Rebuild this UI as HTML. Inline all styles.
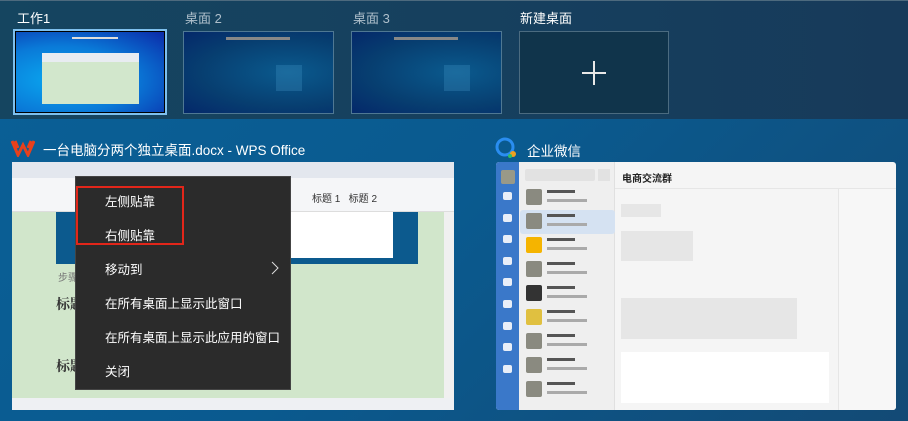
<!DOCTYPE html>
<html><head><meta charset="utf-8"><style>
*{margin:0;padding:0;box-sizing:border-box}
body{width:908px;height:421px;overflow:hidden;font-family:"Liberation Sans","Noto Sans CJK SC",sans-serif;background:linear-gradient(135deg,#0a6097 0%,#0a5a8f 50%,#134a75 100%);position:relative}
.top{position:absolute;left:0;top:0;width:908px;height:119px;background:linear-gradient(90deg,#154560,#163f5e 60%,#173a5a);border-top:1px solid #4d6a7e}
.lab{position:absolute;top:7px;font-size:13px;color:#aebfcb}
.th{position:absolute;top:30px;height:83px;border:1px solid #4f7893;background:radial-gradient(ellipse at 70% 50%,#0a5a8e,#073e70 60%,#04286a);}
.a{position:absolute}
.t{position:absolute;color:#fff;font-size:13.5px}
.mi{position:absolute;left:105px;color:#fff;font-size:12.5px}
.li{position:absolute;left:24px;width:95px;height:24px}
.li .av{position:absolute;left:6px;top:3px;width:16px;height:16px;background:#8a8a80;border-radius:2px}
.li .n{position:absolute;left:27px;top:4px;width:28px;height:3px;background:#555}
.li .m{position:absolute;left:27px;top:13px;width:40px;height:3px;background:#aaa}
.si{position:absolute;left:7px;width:9px;height:8px;background:#e8eef8;border-radius:2px}
</style></head><body>
<div class="top">
<div class="lab" style="left:17px;color:#fff">工作1</div>
<div class="lab" style="left:185px">桌面 2</div>
<div class="lab" style="left:353px">桌面 3</div>
<div class="lab" style="left:520px;color:#fff">新建桌面</div>
<div class="th" style="left:13px;top:28px;width:154px;height:86px;border:2px solid #7ec0ee;background:#000;padding:1px">
 <div style="width:100%;height:100%;background:radial-gradient(ellipse at 30% 60%,#0aa8f0,#0a7ad8 50%,#0b2aa8)"></div>
 <div class="a" style="left:27px;top:22px;width:97px;height:51px;background:#d2e7cc;border-top:9px solid #e8ecf1"></div>
 <div class="a" style="left:57px;top:6px;width:46px;height:2px;background:#ddd"></div>
</div>
<div class="th" style="left:183px;width:151px"><div class="a" style="left:42px;top:5px;width:64px;height:3px;background:#888"></div><div class="a" style="left:92px;top:33px;width:26px;height:26px;background:rgba(60,140,190,.35)"></div></div>
<div class="th" style="left:351px;width:151px"><div class="a" style="left:42px;top:5px;width:64px;height:3px;background:#888"></div><div class="a" style="left:92px;top:33px;width:26px;height:26px;background:rgba(60,140,190,.35)"></div></div>
<div class="th" style="left:519px;width:150px;background:#10344b;border-color:#4b6b80">
 <div class="a" style="left:62px;top:40px;width:24px;height:2px;background:#e8e8e8"></div>
 <div class="a" style="left:73px;top:29px;width:2px;height:24px;background:#e8e8e8"></div>
</div>
</div>

<!-- WPS -->
<svg class="a" style="left:11px;top:139px" width="24" height="18" viewBox="0 0 24 18"><path d="M1 2 L7 16 L12 6 L17 16 L23 2 M4 2 L7 9 M20 2 L17 9" stroke="#e8401c" stroke-width="3" fill="none"/></svg>
<div class="t" style="left:43px;top:139px">一台电脑分两个独立桌面.docx - WPS Office</div>
<div class="a" style="left:12px;top:162px;width:442px;height:248px;background:#d1e6cb">
 <div class="a" style="left:0;top:0;width:442px;height:16px;background:#e3e7ee"></div>
 <div class="a" style="left:0;top:16px;width:442px;height:34px;background:#f5f6f8;border-bottom:1px solid #ddd"></div>
 <div class="a" style="left:44px;top:50px;width:362px;height:52px;background:#0c5a8e"></div>
 <div class="a" style="left:66px;top:50px;width:315px;height:46px;background:#fff"></div>
 <div class="a" style="left:0;top:236px;width:442px;height:12px;background:#eef0f3"></div>
 <div class="a" style="left:46px;top:107px;font-size:10px;color:#777">步骤</div>
 <div class="a" style="left:44px;top:132px;font-size:14px;color:#333;font-weight:bold;font-family:'Noto Serif CJK SC',serif">标题</div>
 <div class="a" style="left:44px;top:194px;font-size:14px;color:#333;font-weight:bold;font-family:'Noto Serif CJK SC',serif">标题</div>
 <div class="a" style="left:300px;top:28px;font-size:10px;color:#333">标题 1 &nbsp; 标题 2</div>
 <div class="a" style="left:432px;top:50px;width:10px;height:186px;background:#f0f0f0"></div>
</div>
<div class="a" style="left:75px;top:176px;width:216px;height:214px;background:#2b2b2b;border:1px solid #444"></div>
<div class="a" style="left:76px;top:186px;width:108px;height:59px;border:2px solid #e2261a"></div>
<div class="mi" style="top:191px">左侧贴靠</div>
<div class="mi" style="top:225px">右侧贴靠</div>
<div class="mi" style="top:259px">移动到</div>
<svg class="a" style="left:271px;top:261px" width="8" height="14"><path d="M1 1 L7 7 L1 13" stroke="#ddd" fill="none"/></svg>
<div class="mi" style="top:293px">在所有桌面上显示此窗口</div>
<div class="mi" style="top:327px">在所有桌面上显示此应用的窗口</div>
<div class="mi" style="top:361px">关闭</div>

<!-- WeChat -->
<svg class="a" style="left:495px;top:136px" width="24" height="24" viewBox="0 0 24 24"><circle cx="10" cy="11" r="8" stroke="#2a8df0" stroke-width="3" fill="none"/><circle cx="18" cy="18" r="3" fill="#f0a020"/><circle cx="15" cy="20" r="2" fill="#30c060"/></svg>
<div class="t" style="left:527px;top:140px">企业微信</div>
<div class="a" style="left:496px;top:162px;width:400px;height:248px;background:#f5f5f5;border-radius:3px;overflow:hidden">
 <div class="a" style="left:0;top:0;width:23px;height:248px;background:#3a78c9"></div>
 <div class="a" style="left:5px;top:8px;width:14px;height:14px;background:#998;border-radius:2px"></div>
 <div class="si" style="top:30px"></div><div class="si" style="top:52px"></div><div class="si" style="top:73px"></div><div class="si" style="top:95px"></div><div class="si" style="top:116px"></div><div class="si" style="top:138px"></div><div class="si" style="top:160px"></div><div class="si" style="top:181px"></div><div class="si" style="top:203px"></div>
 <div class="a" style="left:23px;top:0;width:96px;height:248px;background:#efefef;border-right:1px solid #e0e0e0"></div>
 <div class="a" style="left:29px;top:7px;width:70px;height:12px;background:#e2e2e2;border-radius:2px"></div>
 <div class="a" style="left:102px;top:7px;width:12px;height:12px;background:#e2e2e2"></div>
 <div class="a" style="left:24px;top:48px;width:95px;height:24px;background:#d5e2f2;border-radius:3px"></div>
 <div class="li" style="top:24px"><div class="av"></div><div class="n"></div><div class="m"></div></div>
 <div class="li" style="top:48px"><div class="av"></div><div class="n"></div><div class="m"></div></div>
 <div class="li" style="top:72px"><div class="av" style="background:#f5b400"></div><div class="n"></div><div class="m"></div></div>
 <div class="li" style="top:96px"><div class="av"></div><div class="n"></div><div class="m"></div></div>
 <div class="li" style="top:120px"><div class="av" style="background:#333"></div><div class="n"></div><div class="m"></div></div>
 <div class="li" style="top:144px"><div class="av" style="background:#e0c040"></div><div class="n"></div><div class="m"></div></div>
 <div class="li" style="top:168px"><div class="av"></div><div class="n"></div><div class="m"></div></div>
 <div class="li" style="top:192px"><div class="av"></div><div class="n"></div><div class="m"></div></div>
 <div class="li" style="top:216px"><div class="av"></div><div class="n"></div><div class="m"></div></div>
 <div class="a" style="left:126px;top:8px;font-size:10px;font-weight:bold;color:#222">电商交流群</div>
 <div class="a" style="left:119px;top:26px;width:281px;height:1px;background:#e6e6e6"></div>
 <div class="a" style="left:125px;top:42px;width:40px;height:13px;background:#e6e6e6"></div>
 <div class="a" style="left:125px;top:69px;width:72px;height:30px;background:#e6e6e6"></div>
 <div class="a" style="left:125px;top:136px;width:176px;height:41px;background:#e6e6e6"></div>
 <div class="a" style="left:125px;top:190px;width:208px;height:51px;background:#fff"></div>
 <div class="a" style="left:342px;top:27px;width:58px;height:221px;background:#f7f7f7;border-left:1px solid #e6e6e6"></div>
</div>
</body></html>
